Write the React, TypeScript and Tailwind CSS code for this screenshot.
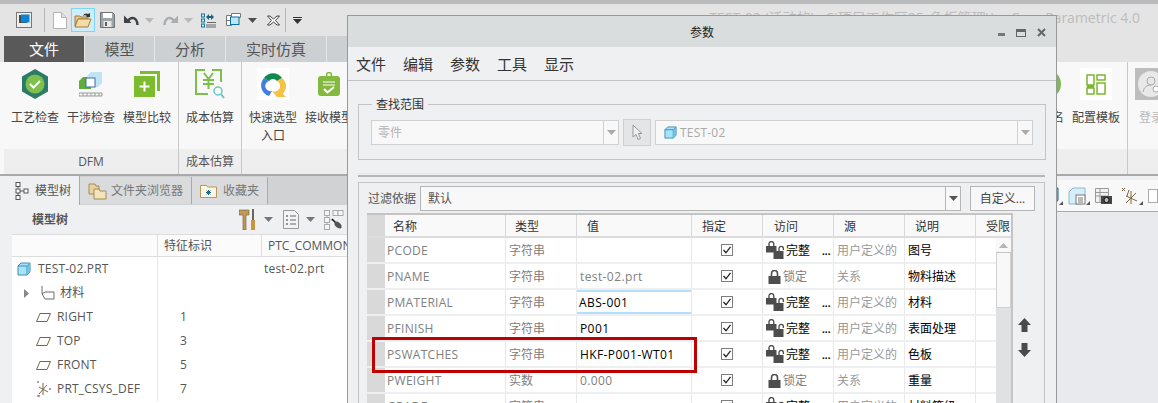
import React from "react";

const Caret = ({ c = "#8c8c8c", className = "" }: { c?: string; className?: string }) => (
  <svg width="9" height="5" viewBox="0 0 9 5" className={className}>
    <path d="M0 0h9L4.5 5z" fill={c} />
  </svg>
);

const Cube = ({ size = 14 }: { size?: number }) => (
  <svg width={size} height={size} viewBox="0 0 14 14">
    <path d="M1 4 4 1h9v9l-3 3H1z" fill="#a6e2fa" stroke="#3f8fb4" />
    <path d="M1 4h9v9M10 4l3-3" fill="none" stroke="#3f8fb4" />
    <path d="M10 4l3-3v9l-3 3z" fill="#6cc0e4" />
  </svg>
);

const Lock = () => (
  <svg width="13" height="14" viewBox="0 0 13 14">
    <path d="M3.500 6V3.500a3 3 0 0 1 6 0V6" fill="none" stroke="#4d4d4d" strokeWidth="1.600" />
    <rect x="0.500" y="6" width="12" height="8" fill="#4d4d4d" />
  </svg>
);

const LockPair = () => (
  <svg width="20" height="20" viewBox="0 0 20 20">
    <path d="M3 5V3a2.400 2.400 0 0 1 4.800 0v2" fill="none" stroke="#4d4d4d" strokeWidth="1.400" />
    <rect x="0" y="5" width="10.500" height="6.500" fill="#4d4d4d" />
    <path d="M13 10V7.500a2.200 2.200 0 0 1 4.400 0V9" fill="none" stroke="#4d4d4d" strokeWidth="1.300" />
    <rect x="7.500" y="10" width="10" height="8" fill="#4d4d4d" />
  </svg>
);

const Check = () => (
  <svg width="12" height="12" viewBox="0 0 12 12">
    <rect x="0.500" y="0.500" width="11" height="11" fill="#fff" stroke="#7d7d7d" />
    <path d="M2.500 6 5 8.800 9.500 2.800" fill="none" stroke="#222" strokeWidth="1.300" />
  </svg>
);

const Plane = () => (
  <svg width="15" height="9" viewBox="0 0 15 9">
    <path d="M4 .5h10.500L11 8.500H.5z" fill="#fff" stroke="#7a6540" />
  </svg>
);

const QuickBar = () => (
  <div className="flex h-8 items-center">
    <svg width="16" height="16" viewBox="0 0 16 16" className="ml-4">
      <rect x="0.500" y="0.500" width="15" height="15" fill="#eee" stroke="#777" />
      <rect x="3" y="3" width="8" height="8" fill="#4a4a4a" />
      <rect x="5" y="2.500" width="8.500" height="8" fill="#0a84d8" />
    </svg>
    <div className="ml-[12px] h-[24px] w-px bg-[#b4b4b4]" />
    <svg width="14" height="17" viewBox="0 0 14 17" className="ml-[8px]">
      <path d="M.5.500h8l5 5v11H.5z" fill="#fff" stroke="#b5b5b5" />
      <path d="M8.500.500v5h5" fill="#ddd" stroke="#b5b5b5" />
    </svg>
    <div className="ml-[4px] flex h-[24px] w-[24px] items-center justify-center border border-[#80d4f8] bg-[#cfeefc]">
      <svg width="18" height="16" viewBox="0 0 18 16">
        <path d="M1 4h5l1 1h7v2H4L1 14z" fill="#e7c588" stroke="#a37f3e" />
        <path d="M4 7h13l-3 8H1z" fill="#f4dca7" stroke="#a37f3e" />
        <path d="M9 4c1-3 4-3 5-2l2-1v4h-4l1-1c-1-1-3-1-4 0z" fill="#333" />
      </svg>
    </div>
    <svg width="15" height="16" viewBox="0 0 15 16" className="ml-[5px]">
      <path d="M.5.500h12l2 2v13H.5z" fill="#9ea3a8" stroke="#6d7276" />
      <rect x="3" y="1" width="9" height="5" fill="#fff" />
      <rect x="3.500" y="9" width="8" height="6" fill="#e8e8e8" />
      <rect x="5" y="10" width="2" height="4" fill="#5a6066" />
    </svg>
    <svg width="15" height="12" viewBox="0 0 15 12" className="ml-[9px]">
      <path d="M4 7C7 2 13 3 13.500 11" fill="none" stroke="#3f4347" strokeWidth="2.500" />
      <path d="M0 1.500V9h7.500z" fill="#3f4347" />
    </svg>
    <Caret c="#b9b9b9" className="ml-[6px]" />
    <svg width="15" height="12" viewBox="0 0 15 12" className="ml-[9px]">
      <path d="M11 7C8 2 2 3 1.500 11" fill="none" stroke="#a9adb0" strokeWidth="2.500" />
      <path d="M15 1.500V9H7.500z" fill="#a9adb0" />
    </svg>
    <Caret c="#b9b9b9" className="ml-[6px]" />
    <svg width="15" height="15" viewBox="0 0 15 15" className="ml-[8px]">
      <g fill="none" stroke="#0f77a8">
        <rect x="0.500" y="1" width="3" height="3" />
        <rect x="0.500" y="6" width="3" height="3" />
        <rect x="0.500" y="11" width="3" height="3" />
      </g>
      <path d="M5 12h10M5 14h10M6 9.500h9" stroke="#666" />
      <path d="M5 4l3-3v2h2V1l3 3-3 3V5H8v2z" fill="#1f5e7e" />
    </svg>
    <svg width="15" height="15" viewBox="0 0 15 15" className="ml-[10px]">
      <path d="M.5 2.500h5v10h-5z M.5 7.500h5" fill="#fff" stroke="#777" />
      <path d="M5.500.500h9v4h-9z" fill="#fff" stroke="#777" />
      <rect x="4.500" y="4" width="8.500" height="7.500" fill="#bfe6f7" stroke="#0f6f99" />
    </svg>
    <Caret c="#4d4d4d" className="ml-[7px]" />
    <svg width="13" height="11" viewBox="0 0 13 11" className="ml-[10px]">
      <path d="M3 1 6.500 4 10 1h2.500L8.500 5.500 12.500 10H10L6.500 7 3 10H.5l4-4.500L.5 1z" fill="#fff" stroke="#444" />
    </svg>
    <div className="ml-[5px] h-[24px] w-px bg-[#b4b4b4]" />
    <div className="ml-[7px] flex flex-col items-center gap-px">
      <div className="h-px w-[9px] bg-[#333]" />
      <Caret c="#333" />
    </div>
  </div>
);

const tabClass = "flex items-center justify-center border-l border-[#e6e7e8] text-[#555] text-[15px]";

const RibbonTabs = () => (
  <div className="ml-1 flex h-[26px]">
    <div className="flex w-[80px] items-center justify-center bg-[#595959] text-[15px] text-white">文件</div>
    <div className={`${tabClass} w-[70px] bg-[#ccd0d3]`}>模型</div>
    <div className={`${tabClass} w-[71px] bg-[#ccd0d3]`}>分析</div>
    <div className={`${tabClass} w-[101px] bg-[#ccd0d3]`}>实时仿真</div>
    <div className={`${tabClass} w-[30px] bg-[#ccd0d3]`} />
  </div>
);

const RibbonItem = ({ label, sub, w = 56, children }: { label: string; sub?: string; w?: number; children: React.ReactNode }) => (
  <div className="flex flex-col items-center pt-[6px]" style={{ width: w }}>
    <div className="flex h-[32px] w-[32px] items-center justify-center">{children}</div>
    <div className="mt-[9px] text-xs leading-[18px] whitespace-nowrap text-[#444]">{label}</div>
    {sub && <div className="text-xs leading-[18px] text-[#444]">{sub}</div>}
  </div>
);

const Ribbon = () => (
  <div className="flex h-[112px] bg-[#f8f8f8] pl-1">
    <div className="flex w-[175px] flex-col border-r border-[#c8c8c8]">
      <div className="flex h-[87px] pl-[3px]">
        <RibbonItem label="工艺检查">
          <svg width="28" height="30" viewBox="0 0 28 30">
            <path d="M14 0 27 7.500v15L14 30 1 22.500v-15z" fill="#2c7a68" />
            <circle cx="14" cy="15" r="9.500" fill="#7fbf4d" />
            <path d="M9 15l3.500 3.500L19 12" fill="none" stroke="#fff" strokeWidth="2" />
          </svg>
        </RibbonItem>
        <RibbonItem label="干涉检查">
          <svg width="24" height="26" viewBox="0 0 24 26">
            <path d="M0 10l4-4h8v12H0z" fill="#5fae3c" />
            <path d="M8 5l4-4h11v11l-4 4H8z" fill="#bfe3f2" />
            <rect x="7" y="7" width="9" height="9" fill="#fff" stroke="#3b6ea5" />
            <path d="M0 22h23v3H0z" fill="none" stroke="#999" />
            <path d="M4 22v3M8 22v3M12 22v3M16 22v3M20 22v3" stroke="#999" />
          </svg>
        </RibbonItem>
        <RibbonItem label="模型比较">
          <svg width="26" height="26" viewBox="0 0 26 26">
            <path d="M6 0h20v20h-3V3H6z" fill="#7dbb2e" />
            <rect x="0" y="5" width="21" height="21" fill="#7dbb2e" />
            <path d="M10.500 10.500v10M5.500 15.500h10" stroke="#fff" strokeWidth="2" />
          </svg>
        </RibbonItem>
      </div>
      <div className="flex flex-1 items-center justify-center bg-[#eeeeee] text-xs text-[#555]">DFM</div>
    </div>
    <div className="flex w-[63px] flex-col border-r border-[#c8c8c8]">
      <div className="flex h-[87px] justify-center">
        <RibbonItem label="成本估算" w={62}>
          <svg width="30" height="30" viewBox="0 0 30 30">
            <path d="M10 1H1v24h12M17 1h9v12" fill="none" stroke="#7cc04b" strokeWidth="2" />
            <path d="M9 4l4.500 6L18 4M8 11h11M8 15h11M13.500 10v10" fill="none" stroke="#7cc04b" strokeWidth="2" />
            <circle cx="23" cy="22" r="4" fill="none" stroke="#6cc4c8" strokeWidth="1.500" />
            <path d="M26 25l3 4" stroke="#6cc4c8" strokeWidth="2" />
          </svg>
        </RibbonItem>
      </div>
      <div className="flex flex-1 items-center justify-center bg-[#eeeeee] text-xs text-[#555]">成本估算</div>
    </div>
    <div className="flex flex-1 flex-col border-r border-[#c8c8c8]">
      <div className="flex h-[87px]">
        <RibbonItem label="快速选型" sub="入口" w={62}>
          <div className="flex h-[32px] w-[32px] items-center justify-center bg-white">
            <svg width="28" height="28" viewBox="0 0 28 28">
              <path d="M5 8a11 11 0 0 1 18 0l-5 3a5 5 0 0 0-8 0z" fill="#0f8a4f" />
              <path d="M5 8a11 11 0 0 0 5 18l3-5a5 5 0 0 1-3-10z" fill="#3f7fe0" />
              <path d="M23 8a11 11 0 0 1 1 16l3 3h-9l-5-6a5 5 0 0 0 5-10z" fill="#f6c244" />
            </svg>
          </div>
        </RibbonItem>
        <RibbonItem label="接收模型" w={50}>
          <svg width="22" height="24" viewBox="0 0 22 24">
            <circle cx="11" cy="3" r="2.500" fill="none" stroke="#83b93f" strokeWidth="1.500" />
            <rect x="0" y="4" width="22" height="20" rx="3" fill="#83b93f" />
            <path d="M5 10h12M5 13h12" stroke="#fff" />
            <path d="M6 17l3.500 3.500L16 15" fill="none" stroke="#fff" strokeWidth="2" />
          </svg>
        </RibbonItem>
        <div className="ml-auto flex">
          <RibbonItem label="批量命名" w={50}>
            <div className="ml-[12px] h-[30px] w-[30px] shrink-0 rounded-full bg-[#7cbb4f]" />
          </RibbonItem>
          <RibbonItem label="配置模板" w={62}>
            <div className="flex h-[32px] w-[32px] items-center justify-center bg-white">
              <svg width="20" height="21" viewBox="0 0 20 21">
                <g fill="none" stroke="#7db52f" strokeWidth="1.500">
                  <rect x="1" y="1" width="7" height="10" />
                  <rect x="11" y="1" width="8" height="5" />
                  <rect x="1" y="14" width="7" height="6" />
                  <rect x="11" y="9" width="8" height="11" />
                </g>
                <rect x="1" y="11" width="7" height="3" fill="#7db52f" />
              </svg>
            </div>
          </RibbonItem>
        </div>
      </div>
      <div className="h-[25px] bg-[#eeeeee]" />
    </div>
    <div className="flex w-[30px] shrink-0 flex-col">
      <div className="h-[87px] pl-[7px] pt-[6px]">
        <div className="flex h-[32px] w-[32px] items-center justify-center bg-[#bdbdbd]">
          <svg width="26" height="26" viewBox="0 0 26 26">
            <circle cx="13" cy="13" r="13" fill="#e8e8e8" />
            <circle cx="13" cy="10" r="4" fill="none" stroke="#aaa" />
            <path d="M5 21c1-5 4-7 8-7" fill="none" stroke="#aaa" />
            <circle cx="18" cy="18" r="3" fill="#fff" stroke="#aaa" />
          </svg>
        </div>
        <div className="mt-[9px] whitespace-nowrap pl-[4px] text-xs leading-[18px] text-[#bbb]">登录</div>
      </div>
      <div className="h-[25px] bg-[#eeeeee]" />
    </div>
  </div>
);

const TreeRow = ({ indent, icon, name, id, file }: { indent: string; icon: React.ReactNode; name: string; id?: string; file?: string }) => (
  <div className="grid h-6 grid-cols-[146px_104px_1fr] items-center text-xs text-[#555]">
    <div className={`flex h-full items-center border-r border-[#e8e8e8] ${indent}`}>
      {icon}
      <span className="whitespace-nowrap tracking-[0.2px]">{name}</span>
    </div>
    <div className="pl-[22px]">{id}</div>
    <div className="pl-[2px] tracking-[0.2px]">{file}</div>
  </div>
);

const ModelTreePanel = () => (
  <div className="flex w-[400px] flex-col bg-[#eff0f1] pl-3">
    <div className="flex h-[29px] bg-[#d0d2d4]">
      <div className="flex h-[29px] w-[68px] items-center gap-[6px] border-r border-[#aaa] bg-[#eff0f1] pl-[3px] text-xs text-[#555]">
        <svg width="14" height="18" viewBox="0 0 14 18">
          <g fill="#fff" stroke="#555">
            <rect x="1" y="0.500" width="4" height="4" />
            <rect x="1" y="7" width="4" height="4" />
            <rect x="1" y="13.500" width="4" height="4" />
            <rect x="9" y="7" width="4" height="4" />
          </g>
          <path d="M3 4.500v2M3 11v2.500M5 9h4" stroke="#555" />
        </svg>
        模型树
      </div>
      <div className="mt-px flex h-[27px] w-[112px] items-center gap-[4px] border-r border-[#aaa] bg-[#d9dbdd] pl-[8px] text-xs text-[#777]">
        <svg width="19" height="18" viewBox="0 0 19 18">
          <path d="M1 2h6l1 2h3v8H1z" fill="#e7d3a2" stroke="#a58a52" />
          <path d="M6 7h5l1 2h6v8H6z" fill="#f3e4bd" stroke="#a58a52" />
        </svg>
        文件夹浏览器
      </div>
      <div className="mt-px flex h-[27px] w-[76px] items-center gap-[6px] border-r border-[#aaa] bg-[#d9dbdd] pl-[8px] text-xs text-[#777]">
        <svg width="17" height="15" viewBox="0 0 17 15">
          <path d="M.5 2.500h6l1 1.500h9v10.500H.5z" fill="#fdf7e6" stroke="#b59a5c" />
          <path d="M8.500 7v5M6 9.500h5M6.700 7.700l3.600 3.600M10.300 7.700l-3.600 3.600" stroke="#1f6f8f" />
        </svg>
        收藏夹
      </div>
    </div>
    <div className="flex h-[29px] items-center pl-5 text-xs font-bold text-[#555]">
      模型树
      <svg width="17" height="21" viewBox="0 0 17 21" className="ml-[171px]">
        <path d="M0 1h10v5H7v15H4V6H0z" fill="#c09a5b" stroke="#6e5a35" strokeWidth="0.600" />
        <rect x="13" y="0" width="2" height="11" fill="#666" />
        <rect x="12" y="11" width="4" height="10" fill="#c9963f" />
      </svg>
      <Caret c="#777" className="ml-[8px]" />
      <svg width="16" height="19" viewBox="0 0 16 19" className="ml-[10px]">
        <path d="M.5.500h11l4 4v14H.5z" fill="#f4f4f4" stroke="#999" />
        <path d="M7 6h6M7 10h6M7 14h6" stroke="#666" />
        <path d="M3 6h2M3 10h2M3 14h2" stroke="#777" strokeWidth="1.500" />
      </svg>
      <Caret c="#777" className="ml-[7px]" />
      <svg width="20" height="20" viewBox="0 0 20 20" className="ml-[9px]">
        <g fill="#f6f6f6" stroke="#aaa">
          <rect x="0.500" y="0.500" width="5" height="5" />
          <rect x="0.500" y="7.500" width="5" height="5" />
          <rect x="0.500" y="14.500" width="5" height="5" />
          <rect x="9" y="0.500" width="5" height="5" />
          <rect x="14" y="0.500" width="5" height="5" />
        </g>
        <path d="M5.500 10h4M3 5.500v2M3 12.500v2" stroke="#aaa" />
        <path d="M8 9l9 9" stroke="#111" strokeWidth="1.500" />
        <ellipse cx="14" cy="15" rx="4" ry="2.500" fill="#555" transform="rotate(40 14 15)" />
      </svg>
    </div>
    <div className="flex-1 border-t border-[#ddd] bg-white">
      <div className="grid h-[22px] grid-cols-[146px_104px_1fr] items-center border-b border-[#ddd] bg-[#fbfbfb] text-xs text-[#555]">
        <div className="h-full border-r border-[#ddd]" />
        <div className="flex h-full items-center border-r border-[#ddd] pl-[6px]">特征标识</div>
        <div className="whitespace-nowrap pl-[6px]">PTC_COMMON_NAME</div>
      </div>
      <TreeRow indent="pl-[5px] gap-[7px]" icon={<Cube />} name="TEST-02.PRT" file="test-02.prt" />
      <TreeRow
        indent="pl-[10px] gap-[5px]"
        icon={
          <>
            <Caret c="#888" className="mr-[3px] -rotate-90" />
            <svg width="16" height="16" viewBox="0 0 16 16">
              <path d="M3 1v6c0 2 1 4 3 7h9V7H6L3 9" fill="none" stroke="#6b6b6b" />
            </svg>
          </>
        }
        name="材料"
      />
      <TreeRow indent="pl-[24px] gap-[6px]" icon={<Plane />} name="RIGHT" id="1" />
      <TreeRow indent="pl-[24px] gap-[6px]" icon={<Plane />} name="TOP" id="3" />
      <TreeRow indent="pl-[24px] gap-[6px]" icon={<Plane />} name="FRONT" id="5" />
      <TreeRow
        indent="pl-[24px] gap-[5px]"
        icon={
          <svg width="16" height="16" viewBox="0 0 16 16">
            <path d="M7 2v12M3 6l9 5M3 13l8-9" stroke="#7a6540" fill="none" />
            <path d="M1 1h2M1 15h3M13 8h2" stroke="#444" />
          </svg>
        }
        name="PRT_CSYS_DEF"
        id="7"
      />
    </div>
  </div>
);

// small flyout corner marker used by the graphics toolbar icons
const ToolIcon = ({ children }: { children: React.ReactNode }) => (
  <div className="flex items-end">
    {children}
    <svg width="4" height="4" viewBox="0 0 4 4">
      <path d="M4 0v4H0z" fill="#555" />
    </svg>
  </div>
);

const GraphicsToolbar = () => (
  <div className="flex flex-1 flex-col bg-[#e9eaed]">
    <div className="h-1 bg-[#eff0f2]" />
    <div className="flex h-8 items-center gap-[5px] border-b border-[#aaa] bg-[#f8f8f8] pl-[648px]">
      <ToolIcon>
        <svg width="18" height="18" viewBox="0 0 18 18">
          <path d="M1 5l4-4h12v12l-3 4H1z" fill="#7cc4e4" stroke="#0f6f99" />
        </svg>
      </ToolIcon>
      <ToolIcon>
        <svg width="18" height="18" viewBox="0 0 18 18">
          <path d="M1 5l4-4h12v12l-3 4H1z" fill="#d5eefa" stroke="#8fb8cc" />
          <rect x="8" y="8" width="9" height="9" fill="#fff" stroke="#777" />
          <path d="M10 11h5M10 13h5M10 15h5" stroke="#777" />
        </svg>
      </ToolIcon>
      <div className="flex items-end">
        <svg width="17" height="18" viewBox="0 0 17 18">
          <path d="M.5 1.500h13v14H.5zM.5 5.500h13M.5 9h13M5 1.500v14" fill="#f2f2f2" stroke="#999" />
          <rect x="6" y="9" width="11" height="8" fill="#444" />
          <circle cx="11.500" cy="13" r="2.500" fill="#bbb" stroke="#111" />
        </svg>
        <div className="w-[4px]" />
      </div>
      <ToolIcon>
        <svg width="18" height="18" viewBox="0 0 18 18">
          <path d="M10 4v13M5 9l11 5M5 16 15 6" stroke="#7a6540" fill="none" />
          <path d="M1 1l3 3M4 1 1 4M6 9 8 3" stroke="#7a6540" />
        </svg>
      </ToolIcon>
      <div className="h-[14px] w-[10px] border border-[#aaa] bg-white" />
    </div>
  </div>
);

type Row = { name: string; type: string; value?: string; editable?: boolean; active?: boolean; locked?: boolean; source: string; desc: string };

const rows: Row[] = [
  { name: "PCODE", type: "字符串", source: "用户定义的", desc: "图号" },
  { name: "PNAME", type: "字符串", value: "test-02.prt", locked: true, source: "关系", desc: "物料描述" },
  { name: "PMATERIAL", type: "字符串", value: "ABS-001", editable: true, active: true, source: "用户定义的", desc: "材料" },
  { name: "PFINISH", type: "字符串", value: "P001", editable: true, source: "用户定义的", desc: "表面处理" },
  { name: "PSWATCHES", type: "字符串", value: "HKF-P001-WT01", editable: true, source: "用户定义的", desc: "色板" },
  { name: "PWEIGHT", type: "实数", value: "0.000", locked: true, source: "关系", desc: "重量" },
  { name: "GRADE", type: "字符串", source: "用户定义的", desc: "材料等级" },
];

const gridCols = "grid grid-cols-[18px_121px_71px_115px_71px_71px_71px_71px_36px]";
const cellLine = "border-r border-[#e9e9e9]";
const headCell = "flex items-center border-r border-[#d8d8d8] pt-[2px]";

const ParamTable = () => (
  <div className="relative ml-[8px] mt-[2px] h-[200px] w-[646px] overflow-hidden border-r-2 border-t-2 border-[#c4c4c4] bg-white">
    <div className={`${gridCols} h-[23px] border-b-2 border-[#dcdcdc] bg-[#f9f9f9] text-xs text-[#333]`}>
      <div className="bg-[#d9d9d9]" />
      <div className={`${headCell} pl-[8px]`}>名称</div>
      <div className={`${headCell} pl-[9px]`}>类型</div>
      <div className={`${headCell} pl-[10px]`}>值</div>
      <div className={`${headCell} pl-[10px]`}>指定</div>
      <div className={`${headCell} pl-[11px]`}>访问</div>
      <div className={`${headCell} pl-[10px]`}>源</div>
      <div className={`${headCell} pl-[10px]`}>说明</div>
      <div className="flex items-center whitespace-nowrap pl-[10px] pt-[2px]">受限</div>
    </div>
    {rows.map((r) => (
      <div key={r.name} className={`${gridCols} h-[26px] border-b-2 border-[#eeeff0] text-xs`}>
        <div className="bg-[#d9d9d9]" />
        <div className={`flex items-center pl-[2px] pt-px tracking-[0.3px] text-[#808080] ${cellLine}`}>{r.name}</div>
        <div className={`flex items-center pl-[3px] pt-px text-[#808080] ${cellLine}`}>{r.type}</div>
        <div className={`flex items-center pt-px tracking-[0.4px] ${cellLine} ${r.editable ? "text-black" : "text-[#808080]"} ${r.active ? "border-y-2 border-y-[#b3e0fb] pl-[2px]" : "pl-[3px]"}`}>{r.value}</div>
        <div className={`flex items-center justify-center ${cellLine}`}>
          <Check />
        </div>
        {r.locked ? (
          <div className={`flex items-center gap-[2px] pl-[5px] pt-px text-[#808080] ${cellLine}`}>
            <Lock />
            锁定
          </div>
        ) : (
          <div className={`flex items-center pl-[3px] pt-px text-black ${cellLine}`}>
            <LockPair />
            <span>完整</span>
            <span className="ml-[12px] self-end pb-[6px] text-[10px] font-bold leading-none">...</span>
          </div>
        )}
        <div className={`flex items-center pl-[3px] pt-px whitespace-nowrap text-[#999] ${cellLine}`}>{r.source}</div>
        <div className={`flex items-center pl-[3px] pt-px text-black ${cellLine}`}>{r.desc}</div>
        <div />
      </div>
    ))}
    <div className="absolute bottom-0 right-0 top-[23px] flex w-[15px] flex-col bg-[#e0e1e2]">
      <div className="flex h-[15px] items-center justify-center border-b border-[#c4c4c4] bg-[#f8f8f8]">
        <Caret c="#b5b5b5" className="rotate-180" />
      </div>
      <div className="h-[55px] border-x border-b border-[#d0d0d0] bg-[#f8f8f8]" />
    </div>
  </div>
);

const MoveArrow = ({ down }: { down?: boolean }) => (
  <svg width="13" height="14" viewBox="0 0 13 14" className={down ? "rotate-180" : ""}>
    <path d="M6.500 0 13 7H9.500v7h-6V7H0z" fill="#4a4a4a" />
  </svg>
);

const ParamDialog = () => (
  <div className="absolute left-[347px] top-[15px] h-[410px] w-[710px] border border-[#999] bg-[#eff0f2]">
    <div className="relative flex h-[31px] items-center justify-center bg-[#dadddd] pt-[2px] text-xs text-[#222]">
      参数
      <div className="absolute right-[10px] top-[12px] flex items-center gap-[11px]">
        <div className="mt-[4px] h-[3px] w-[7px] bg-[#777]" />
        <div className="h-[8px] w-[10px] border border-t-[3px] border-[#666]" />
        <svg width="9" height="9" viewBox="0 0 9 9">
          <path d="M1 1l7 7M8 1 1 8" stroke="#666" strokeWidth="2" />
        </svg>
      </div>
    </div>
    <div className="flex h-[34px] items-center gap-[17px] border-b border-[#c4c4c4] pl-2 pt-px text-[15px] text-[#333]">
      <span>文件</span>
      <span>编辑</span>
      <span>参数</span>
      <span>工具</span>
      <span>显示</span>
    </div>
    <fieldset className="ml-[10px] mt-[15px] h-[64px] w-[687px] border border-[#c4c4c4] px-3">
      <legend className="ml-[1px] px-[4px] text-xs leading-4 text-[#333]">
        <span className="block translate-y-[1px]">查找范围</span>
      </legend>
      <div className="mt-[7px] flex items-center">
        <div className="flex h-[25px] w-[248px] items-center border border-[#d0d0d0] bg-[#f8f8f8] pl-[6px] text-xs text-[#b5b5b5]">
          <span className="flex-1">零件</span>
          <div className="flex h-full w-[15px] items-center justify-center border-l border-[#d0d0d0]">
            <Caret c="#aaa" />
          </div>
        </div>
        <div className="ml-[4px] flex h-[27px] w-[28px] items-center justify-center border border-[#d0d0d0] bg-[#e4e5e6]">
          <svg width="11" height="17" viewBox="0 0 11 17">
            <path d="M1 1v12l3-2.500 2 5 2.500-1-2-5H10z" fill="#eee" stroke="#999" />
          </svg>
        </div>
        <div className="ml-[4px] flex h-[25px] w-[378px] items-center gap-[3px] border border-[#d0d0d0] bg-[#f8f8f8] pl-[8px] text-xs tracking-[0.2px] text-[#aaa]">
          <Cube size={13} />
          <span className="flex-1">TEST-02</span>
          <div className="flex h-full w-[15px] items-center justify-center border-l border-[#d0d0d0]">
            <Caret c="#aaa" />
          </div>
        </div>
      </div>
    </fieldset>
    <div className="ml-[10px] mt-[13px] h-[4px] w-[687px] border-b-2 border-t border-b-[#b5b5b5] border-t-[#d6eeee]" />
    <div className="ml-[10px] mt-[5px] h-[240px] w-[687px] border border-[#c4c4c4]">
      <div className="mt-[3px] flex h-[25px] items-center text-xs text-[#555]">
        <span className="ml-[9px] w-[52px] whitespace-nowrap">过滤依据</span>
        <div className="flex h-full w-[541px] items-center border border-[#b5b5b5] bg-[#f8f8f8] pl-[7px]">
          <span className="flex-1">默认</span>
          <div className="flex h-full w-[15px] items-center justify-center border-l border-[#b5b5b5]">
            <Caret c="#555" />
          </div>
        </div>
        <div className="ml-[9px] flex h-full w-[65px] items-center justify-center border border-[#b5b5b5] bg-[#f8f8f8] text-[#444]">自定义...</div>
      </div>
      <div className="flex">
        <ParamTable />
        <div className="ml-[5px] flex flex-col gap-[11px] pt-[107px]">
          <MoveArrow />
          <MoveArrow down />
        </div>
      </div>
    </div>
  </div>
);

export default function App() {
  return (
    <div className="relative h-[403px] w-[1158px] overflow-hidden bg-[#e4e4e4] font-['Open_Sans','Noto_Sans_CJK_SC',sans-serif]">
      <div className="h-1 bg-[#b8babc]" />
      <div className="absolute right-[18px] top-[8px] whitespace-nowrap text-sm text-[#bcbcbc]">TEST-02 (活动的) - Si项目工作区25_色板管理\\...  Creo Parametric 4.0</div>
      <QuickBar />
      <RibbonTabs />
      <Ribbon />
      <div className="h-[2px] bg-[#a9a9a9]" />
      <div className="flex h-[227px]">
        <ModelTreePanel />
        <GraphicsToolbar />
      </div>
      <ParamDialog />
      {/* red highlight around the PSWATCHES row */}
      <div className="absolute left-[372px] top-[337px] h-[36px] w-[325px] border-[3px] border-[#bf0000]" />
    </div>
  );
}
